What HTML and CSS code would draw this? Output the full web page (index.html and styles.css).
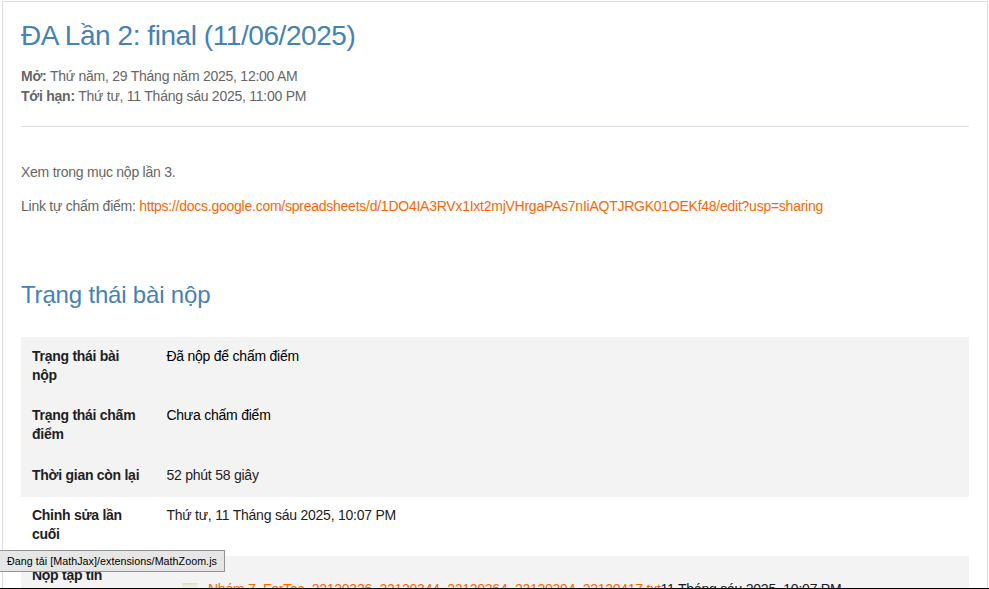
FILE: index.html
```html
<!DOCTYPE html>
<html lang="vi">
<head>
<meta charset="utf-8">
<title>ĐA Lần 2: final (11/06/2025)</title>
<link rel="stylesheet" href="styles.css">
</head>
<body>
<main class="card">
  <h1 class="title">ĐA Lần 2: final (11/06/2025)</h1>
  <div class="dates">
    <div><strong>Mở:</strong> Thứ năm, 29 Tháng năm 2025, 12:00 AM</div>
    <div><strong>Tới hạn:</strong> Thứ tư, 11 Tháng sáu 2025, 11:00 PM</div>
  </div>
  <section class="intro">
    <p>Xem trong mục nộp lần 3.</p>
    <p>Link tự chấm điểm: <a href="#">https://docs.google.com/spreadsheets/d/1DO4IA3RVx1Ixt2mjVHrgaPAs7nIiAQTJRGK01OEKf48/edit?usp=sharing</a></p>
  </section>
  <h2 class="subtitle">Trạng thái bài nộp</h2>
  <div class="status">
    <div class="row tall shade"><div class="label">Trạng thái bài<br>nộp</div><div class="value dark">Đã nộp để chấm điểm</div></div>
    <div class="row taller shade"><div class="label">Trạng thái chấm<br>điểm</div><div class="value dark">Chưa chấm điểm</div></div>
    <div class="row short shade"><div class="label">Thời gian còn lại</div><div class="value">52 phút 58 giây</div></div>
    <div class="row tall snug"><div class="label">Chỉnh sửa lần<br>cuối</div><div class="value">Thứ tư, 11 Tháng sáu 2025, 10:07 PM</div></div>
    <div class="row tall shade"><div class="label">Nộp tập tin</div><div class="value file"><i class="file-icon"></i><a href="#" class="filename">Nhóm 7_ForTec_22120326_22120344_22120364_22120394_22120417.txt</a><span>11 Tháng sáu 2025, 10:07 PM</span></div></div>
  </div>
</main>
<div class="loader">Đang tải [MathJax]/extensions/MathZoom.js</div>
<div class="edge"></div>
</body>
</html>
```
FILE: styles.css
```css
* { box-sizing: border-box; }
html { overflow: hidden; }
body {
  margin: 0;
  height: 589px;
  overflow: hidden;
  position: relative;
  background: #fff;
  color: #666;
  font: 14px/20px "Liberation Sans", Arial, sans-serif;
  letter-spacing: -0.25px;
  white-space: nowrap;
}
a { color: #ff6500; text-decoration: none; }
.card {
  width: 986px;
  height: 588px;
  overflow: hidden;
  margin: 1px 0 0 2px;
  padding: 17px 18px 0;
  border: 1px solid #dedede;
  border-bottom: 0;
}
.title {
  margin: 0;
  color: #4682b4;
  font-size: 28px;
  font-weight: 400;
  line-height: 34px;
  letter-spacing: -0.44px;
}
.dates {
  height: 74px;
  padding-top: 13px;
  border-bottom: 1px solid #dee2e6;
}
.intro { padding-top: 35px; height: 154px; }
.intro p { margin: 0 0 14px; }
.subtitle {
  margin: 0 0 28px;
  color: #4682b4;
  font-size: 24px;
  font-weight: 400;
  line-height: 28px;
  letter-spacing: -0.18px;
}
.row { display: flex; padding: 10px 11px; line-height: 19px; color: #1d2125; }
.tall { height: 59px; }
.taller { height: 60px; }
.short { height: 41px; }
.snug { padding-top: 9px; }
.shade { background: #f3f3f3; }
.label { width: 134px; font-weight: 700; letter-spacing: -0.27px; }
.value { padding-left: 0.4px; letter-spacing: -0.23px; }
.dark { color: #000; }
.file { display: flex; padding: 14px 0 0 16px; }
.file-icon { width: 15px; height: 16px; margin: 3px 11px 0 0; background: linear-gradient(#d5dfbd, #eef2e2 4px, #dce5c8); }
.filename { letter-spacing: -0.26px; }
.loader {
  position: absolute;
  left: -1px;
  top: 550px;
  width: 226px;
  height: 22px;
  padding-left: 7px;
  border: 1px solid #939393;
  background: #e6e6e6;
  color: #000;
  font-size: 10.7px;
  line-height: 21px;
  letter-spacing: 0.05px;
}
.edge { position: absolute; left: 0; top: 588px; width: 100%; height: 1px; background: #000; }
```
